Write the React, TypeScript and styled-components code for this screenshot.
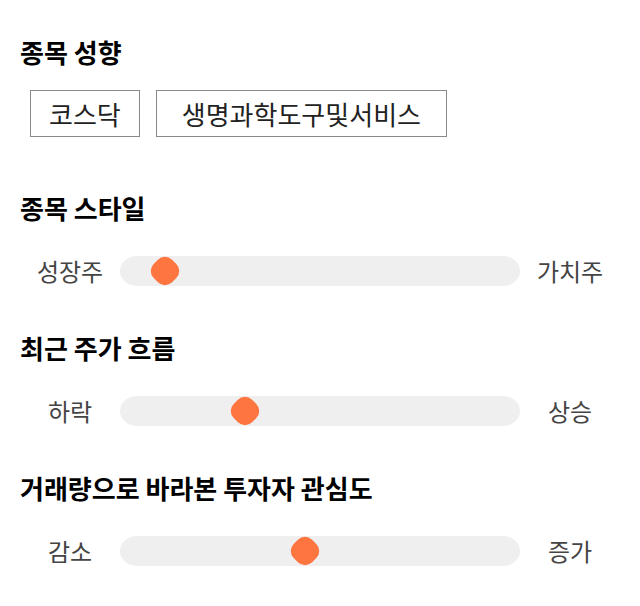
import React from "react";
import styled, { createGlobalStyle } from "styled-components";

const GlobalStyle = createGlobalStyle`
  html, body {
    margin: 0;
    padding: 0;
    background: #ffffff;
  }
  body {
    font-family: "Noto Sans CJK KR", "Noto Sans", sans-serif;
  }
`;

const Page = styled.div`
  width: 640px;
  box-sizing: border-box;
  padding: 37px 20px 0 20px;
  display: flex;
  flex-direction: column;
`;

const Section = styled.section<{ $gap: number; $after: number }>`
  display: flex;
  flex-direction: column;
  gap: ${(p) => p.$gap}px;
  margin-bottom: ${(p) => p.$after}px;
`;

const Heading = styled.h2`
  margin: 0;
  height: 30px;
  line-height: 30px;
  font-size: 26px;
  font-weight: 700;
  color: #000;
`;

const TagList = styled.div`
  display: flex;
  gap: 16px;
  padding-left: 10px;
`;

const Tag = styled.span<{ $pad: number }>`
  box-sizing: border-box;
  height: 47px;
  padding: 0 ${(p) => p.$pad}px;
  border: 1px solid #8a8a8a;
  display: flex;
  align-items: center;
  font-size: 26px;
  color: #222;
`;

const SliderRow = styled.div`
  display: grid;
  grid-template-columns: 100px 400px 100px;
  align-items: center;
  height: 30px;
`;

const EndLabel = styled.span`
  text-align: center;
  font-size: 24px;
  color: #444;
  line-height: 30px;
`;

const Track = styled.div`
  position: relative;
  height: 30px;
  background: #efefef;
  border-radius: 17px / 15px;
`;

const Thumb = styled.div`
  position: absolute;
  top: 2px;
  width: 26px;
  height: 26px;
  margin-left: -13px;
  background: #ff7540;
  border-radius: 10px;
  transform: rotate(45deg);
`;

type SliderProps = { left: string; right: string; value: number };

const Slider = ({ left, right, value }: SliderProps) => (
  <SliderRow>
    <EndLabel>{left}</EndLabel>
    <Track>
      <Thumb style={{ left: `${value}px` }} />
    </Track>
    <EndLabel>{right}</EndLabel>
  </SliderRow>
);

export default function App() {
  return (
    <>
      <GlobalStyle />
      <Page>
        <Section $gap={23} $after={56}>
          <Heading>종목 성향</Heading>
          <TagList>
            <Tag $pad={18}>코스닥</Tag>
            <Tag $pad={25}>생명과학도구및서비스</Tag>
          </TagList>
        </Section>
        <Section $gap={33} $after={47}>
          <Heading>종목 스타일</Heading>
          <Slider left="성장주" right="가치주" value={45} />
        </Section>
        <Section $gap={33} $after={47}>
          <Heading>최근 주가 흐름</Heading>
          <Slider left="하락" right="상승" value={125} />
        </Section>
        <Section $gap={33} $after={0}>
          <Heading>거래량으로 바라본 투자자 관심도</Heading>
          <Slider left="감소" right="증가" value={185} />
        </Section>
      </Page>
    </>
  );
}
